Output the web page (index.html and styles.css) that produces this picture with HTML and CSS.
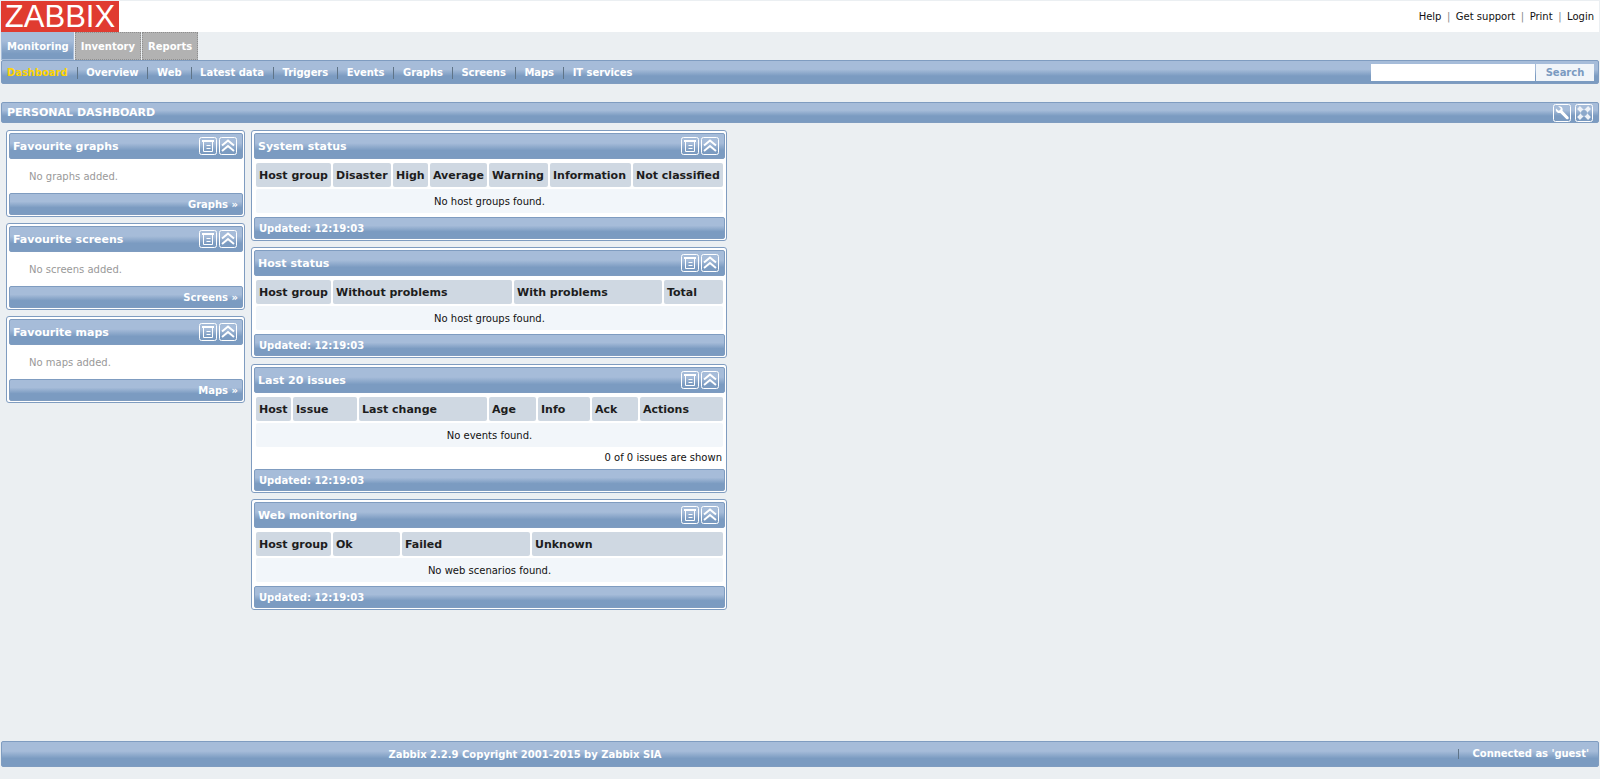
FILE: index.html
```html
<!DOCTYPE html>
<html lang="en">
<head>
  <meta charset="UTF-8">
  <title>Dashboard</title>
  <meta name="viewport" content="width=device-width, initial-scale=1">
  <link rel="stylesheet" href="styles.css">
</head>
<body>

<svg class="defs" aria-hidden="true">
  <symbol id="i-menu" viewBox="0 0 18 18">
    <rect x="0.5" y="0.5" width="17" height="17" rx="2" fill="none" stroke="#fff"/>
    <path d="M3 4h12" fill="none" stroke="#fff" stroke-width="2"/>
    <path d="M4.500 4v10.500h9V4M7.500 8.500h4M7.500 11.500h4" fill="none" stroke="#fff"/>
  </symbol>
  <symbol id="i-collapse" viewBox="0 0 18 18">
    <rect x="0.5" y="0.5" width="17" height="17" rx="2" fill="none" stroke="#fff"/>
    <path d="M3 8.500l6-5 6 5M3 14l6-5 6 5" fill="none" stroke="#fff" stroke-width="2"/>
  </symbol>
  <symbol id="i-wrench" viewBox="0 0 18 18">
    <rect x="0.5" y="0.5" width="17" height="17" rx="2" fill="none" stroke="#fff"/>
    <path d="M3 4.500l2.500 2.200 1.700-.6.500-1.800L5.200 2.500c2-.8 4.300.6 4.500 2.700l-.2 1.500 6 6.200c.8 1.800-.7 2.900-2.200 2.200L7.300 8.900c-2.600.8-5.100-1.600-4.300-4.400z" fill="#fff"/>
  </symbol>
  <symbol id="i-full" viewBox="0 0 18 18">
    <rect x="0.5" y="0.5" width="17" height="17" rx="2" fill="none" stroke="#fff"/>
    <path d="M3.500 3.500l11 11M14.500 3.500l-11 11" fill="none" stroke="#eef2f7" stroke-width="4"/>
    <circle cx="9" cy="9" r="3" fill="#8ca8ca"/>
  </symbol>
</svg>

<header class="top">
  <div class="logo">ZABBIX</div>
  <nav class="top-links">
    <a href="#">Help</a><span class="pipe">|</span><a href="#">Get support</a><span class="pipe">|</span><a href="#">Print</a><span class="pipe">|</span><a href="#">Login</a>
  </nav>
</header>

<div class="tabs">
  <a href="#" class="tab tab-active">Monitoring</a>
  <a href="#" class="tab">Inventory</a>
  <a href="#" class="tab">Reports</a>
</div>

<div class="bar subnav">
  <nav class="subnav-links">
    <a href="#" class="current">Dashboard</a>
    <a href="#">Overview</a>
    <a href="#">Web</a>
    <a href="#">Latest data</a>
    <a href="#">Triggers</a>
    <a href="#">Events</a>
    <a href="#">Graphs</a>
    <a href="#">Screens</a>
    <a href="#">Maps</a>
    <a href="#">IT services</a>
  </nav>
  <form class="search">
    <input type="text" class="search-input" aria-label="Search">
    <button type="button" class="search-btn">Search</button>
  </form>
</div>

<div class="bar page-title">
  <h1>PERSONAL DASHBOARD</h1>
  <div class="icons">
    <svg class="icon"><use href="#i-wrench"/></svg>
    <svg class="icon"><use href="#i-full"/></svg>
  </div>
</div>

<main class="columns">
  <div class="col">
    <section class="widget">
      <div class="bar widget-head">
        <h2>Favourite graphs</h2>
        <div class="icons"><svg class="icon"><use href="#i-menu"/></svg><svg class="icon"><use href="#i-collapse"/></svg></div>
      </div>
      <p class="empty">No graphs added.</p>
      <div class="bar widget-foot foot-right"><a href="#">Graphs »</a></div>
    </section>
    <section class="widget">
      <div class="bar widget-head">
        <h2>Favourite screens</h2>
        <div class="icons"><svg class="icon"><use href="#i-menu"/></svg><svg class="icon"><use href="#i-collapse"/></svg></div>
      </div>
      <p class="empty">No screens added.</p>
      <div class="bar widget-foot foot-right"><a href="#">Screens »</a></div>
    </section>
    <section class="widget">
      <div class="bar widget-head">
        <h2>Favourite maps</h2>
        <div class="icons"><svg class="icon"><use href="#i-menu"/></svg><svg class="icon"><use href="#i-collapse"/></svg></div>
      </div>
      <p class="empty">No maps added.</p>
      <div class="bar widget-foot foot-right"><a href="#">Maps »</a></div>
    </section>
  </div>

  <div class="col">
    <section class="widget">
      <div class="bar widget-head">
        <h2>System status</h2>
        <div class="icons"><svg class="icon"><use href="#i-menu"/></svg><svg class="icon"><use href="#i-collapse"/></svg></div>
      </div>
      <table class="grid">
        <colgroup><col class="w75"><col class="w58"><col class="w35"><col class="w57"><col class="w59"><col class="w81"><col></colgroup>
        <thead><tr><th>Host group</th><th>Disaster</th><th>High</th><th>Average</th><th>Warning</th><th>Information</th><th>Not classified</th></tr></thead>
        <tbody><tr><td colspan="7">No host groups found.</td></tr></tbody>
      </table>
      <div class="bar widget-foot">Updated: 12:19:03</div>
    </section>

    <section class="widget">
      <div class="bar widget-head">
        <h2>Host status</h2>
        <div class="icons"><svg class="icon"><use href="#i-menu"/></svg><svg class="icon"><use href="#i-collapse"/></svg></div>
      </div>
      <table class="grid">
        <colgroup><col class="w75"><col class="w179"><col class="w148"><col></colgroup>
        <thead><tr><th>Host group</th><th>Without problems</th><th>With problems</th><th>Total</th></tr></thead>
        <tbody><tr><td colspan="4">No host groups found.</td></tr></tbody>
      </table>
      <div class="bar widget-foot">Updated: 12:19:03</div>
    </section>

    <section class="widget">
      <div class="bar widget-head">
        <h2>Last 20 issues</h2>
        <div class="icons"><svg class="icon"><use href="#i-menu"/></svg><svg class="icon"><use href="#i-collapse"/></svg></div>
      </div>
      <table class="grid">
        <colgroup><col class="w35"><col class="w64"><col class="w128"><col class="w47"><col class="w52"><col class="w46"><col></colgroup>
        <thead><tr><th>Host</th><th>Issue</th><th>Last change</th><th>Age</th><th>Info</th><th>Ack</th><th>Actions</th></tr></thead>
        <tbody><tr><td colspan="7">No events found.</td></tr></tbody>
      </table>
      <p class="shown">0 of 0 issues are shown</p>
      <div class="bar widget-foot">Updated: 12:19:03</div>
    </section>

    <section class="widget">
      <div class="bar widget-head">
        <h2>Web monitoring</h2>
        <div class="icons"><svg class="icon"><use href="#i-menu"/></svg><svg class="icon"><use href="#i-collapse"/></svg></div>
      </div>
      <table class="grid">
        <colgroup><col class="w75"><col class="w67"><col class="w128"><col></colgroup>
        <thead><tr><th>Host group</th><th>Ok</th><th>Failed</th><th>Unknown</th></tr></thead>
        <tbody><tr><td colspan="4">No web scenarios found.</td></tr></tbody>
      </table>
      <div class="bar widget-foot">Updated: 12:19:03</div>
    </section>
  </div>
</main>

<footer class="bar page-foot">
  <div class="copyright">Zabbix 2.2.9 Copyright 2001-2015 by Zabbix SIA</div>
  <div class="connected">Connected as 'guest'</div>
</footer>

</body>
</html>
```

FILE: styles.css
```css
/* base */
* { box-sizing: border-box; }
html, body { height: 100%; }
body { margin: 0; padding: 1px 1px 0; background: #ebeff2; color: #111; font: 10px "DejaVu Sans", Verdana, sans-serif; overflow: hidden; }
a { color: inherit; text-decoration: none; }
h1, h2, p { margin: 0; }
.defs { display: none; }

/* the blue striped bar used everywhere */
.bar { display: flex; align-items: center; color: #fff; font-weight: bold; background: linear-gradient(#a6bcd9 0, #a6bcd9 38%, #7b9bc1 68%, #7b9bc1 100%); border: 1px solid #7f9cc0; border-radius: 2px; }

/* header */
.top { display: flex; justify-content: space-between; align-items: center; height: 31px; background: #fff; }
.logo { width: 118px; height: 31px; background: #e03b30; color: #fff; font: 31px/31px "Liberation Sans", Arial, sans-serif; text-align: center; }
.top-links { padding-right: 5px; margin-top: -1px; }
.pipe { margin: 0 5.5px; color: #888; }

/* tabs */
.tabs { display: flex; height: 28px; gap: 1px; }
.tab { display: flex; align-items: center; padding: 0 5px; color: #fff; font-weight: bold; background: #b2b2b2; border: 1px dotted #8f8f8f; }
.tab-active { padding-right: 4px; background: linear-gradient(#a6bcd9 0, #a6bcd9 30%, #7b9bc1 80%); border: 1px solid #a6bcd9; }

/* sub navigation */
.subnav { justify-content: space-between; height: 24px; padding: 0 4px 0 0; }
.subnav-links { display: flex; padding: 1px 0 0 5px; }
.subnav-links a { padding-right: 9px; margin-right: 8.6px; border-right: 1px solid #5f7488; line-height: 12px; letter-spacing: -0.05px; }
.subnav-links a:last-child { border: 0; }
.current { color: #ffd400; }
.search { display: flex; gap: 1px; }
.search-input { width: 164px; height: 17px; padding: 0; border: 0; background: #fff; }
.search-btn { width: 58px; height: 17px; padding: 0; border: 0; background: #f1f5f9; color: #7b9bc1; font: bold 10px "DejaVu Sans", Verdana, sans-serif; }

/* page title */
.page-title { justify-content: space-between; height: 21px; margin-top: 18px; padding: 0 5px; }
.page-title h1 { font-size: 11px; }
.icons { display: flex; gap: 2px; }
.icon { display: block; width: 18px; height: 18px; }
.page-title .icons { gap: 4px; }

/* widgets */
.columns { display: grid; grid-template-columns: 239px 476px; gap: 6px; margin: 7px 0 0 5px; }
.widget { margin-bottom: 6px; padding: 2px 1px 1px 2px; background: #fff; border: 1px solid #7f9cc0; border-radius: 3px; }
.widget-head { justify-content: space-between; height: 26px; padding: 0 5px 0 3px; }
.widget-head h2 { font-size: 11px; }
.widget-foot { height: 22px; margin-top: 2px; padding: 0 4px; }
.foot-right { justify-content: flex-end; margin-top: 0; }
.empty { height: 34px; padding: 1px 0 0 20px; line-height: 34px; color: #999; }
.shown { height: 18px; padding-right: 3px; line-height: 18px; text-align: right; }

/* status tables */
.grid { width: 100%; margin-top: 2px; table-layout: fixed; border-collapse: separate; border-spacing: 2px; }
.grid th { height: 24px; padding: 0 3px; text-align: left; font-size: 11px; white-space: nowrap; background: #cfd8e2; border-radius: 2px; color: #1d1d1d; }
.grid td { height: 24px; text-align: center; background: #f2f6fa; border-radius: 2px; }
.w35 { width: 35px; }
.w46 { width: 46px; }
.w47 { width: 47px; }
.w52 { width: 52px; }
.w57 { width: 57px; }
.w58 { width: 58px; }
.w59 { width: 59px; }
.w64 { width: 64px; }
.w67 { width: 67px; }
.w75 { width: 75px; }
.w81 { width: 81px; }
.w128 { width: 128px; }
.w148 { width: 148px; }
.w179 { width: 179px; }

/* footer */
.page-foot { position: absolute; left: 1px; right: 1px; top: 741px; height: 26px; padding: 0 9px 0 0; }
.copyright { width: 1046px; text-align: center; }
.connected { margin-left: auto; padding-left: 14px; border-left: 1px solid #5f7488; line-height: 10px; letter-spacing: -0.05px; }
```
